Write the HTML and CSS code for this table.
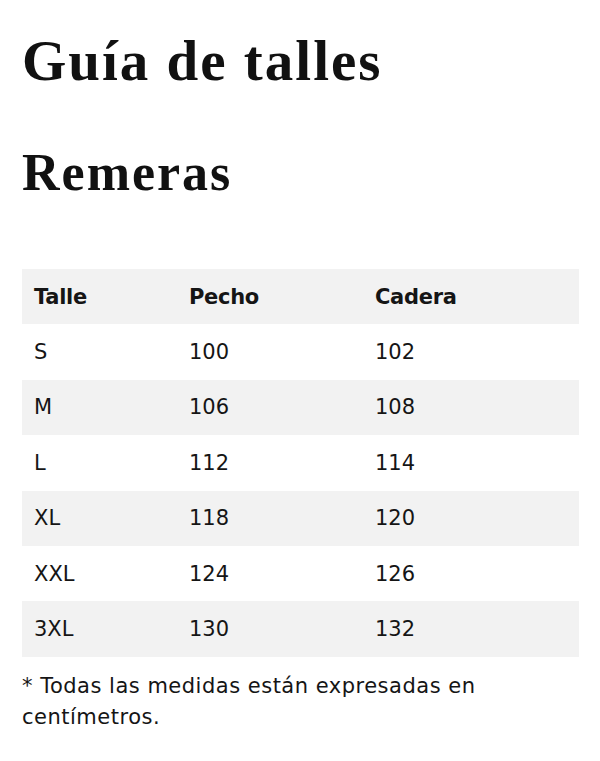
FILE: index.html
```html
<!DOCTYPE html>
<html lang="es">
<head>
<meta charset="utf-8">
<link rel="stylesheet" href="styles.css">
</head>
<body>
<main class="page">
  <h1 class="title">Guía de talles</h1>
  <h2 class="subtitle">Remeras</h2>
  <table class="sizes">
    <thead>
      <tr><th class="c1">Talle</th><th class="c2">Pecho</th><th class="c3">Cadera</th></tr>
    </thead>
    <tbody>
      <tr><td>S</td><td>100</td><td>102</td></tr>
      <tr><td>M</td><td>106</td><td>108</td></tr>
      <tr><td>L</td><td>112</td><td>114</td></tr>
      <tr><td>XL</td><td>118</td><td>120</td></tr>
      <tr><td>XXL</td><td>124</td><td>126</td></tr>
      <tr><td>3XL</td><td>130</td><td>132</td></tr>
    </tbody>
  </table>
  <p class="note">* Todas las medidas están expresadas en centímetros.</p>
</main>
</body>
</html>
```
FILE: styles.css
```css
html, body {
  margin: 0;
  padding: 0;
  background: #fff;
}
.page {
  padding: 0 22px;
  color: #111;
}
.title, .subtitle {
  font-family: "Liberation Serif", "DejaVu Serif", serif;
  font-weight: 700;
  line-height: 1;
  margin: 0;
  color: #111;
  letter-spacing: 2px;
}
.title {
  font-size: 57px;
  padding-top: 32px;
}
.subtitle {
  font-size: 52px;
  margin-top: 58px;
}
.sizes {
  margin-top: 70px;
  width: 557px;
  border-collapse: collapse;
  font-family: "DejaVu Sans", Roboto, sans-serif;
  font-size: 21px;
  color: #151515;
}
.sizes th, .sizes td {
  height: 55.4px;
  padding: 0 0 0 12px;
  text-align: left;
  vertical-align: middle;
  box-sizing: border-box;
}
.sizes th {
  font-weight: 700;
  letter-spacing: -0.3px;
}
.c1 { width: 155px; }
.c2 { width: 186px; }
.sizes thead tr,
.sizes tbody tr:nth-child(even) {
  background: #f2f2f2;
}
.note {
  font-family: "DejaVu Sans", Roboto, sans-serif;
  font-size: 21px;
  line-height: 31px;
  letter-spacing: 0.5px;
  margin: 14px 0 0 0;
  color: #151515;
}
```
